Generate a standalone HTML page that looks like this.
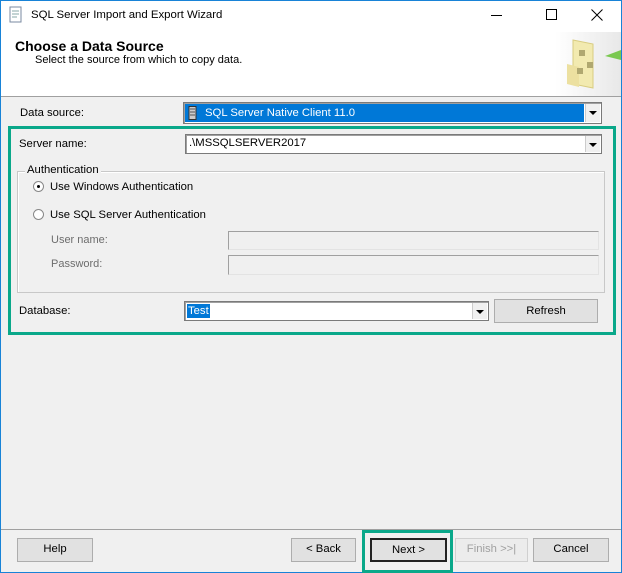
<!DOCTYPE html>
<html><head><style>
*{box-sizing:border-box;margin:0;padding:0}
body{width:622px;height:573px;position:relative;background:#f0f0f0;font-family:"Liberation Sans",sans-serif;font-size:11.3px;color:#000;overflow:hidden}
.a{position:absolute}
.win{left:0;top:0;width:622px;height:573px;border:1px solid #1883d7}
.btn{position:absolute;background:#e1e1e1;border:1px solid #adadad;text-align:center;line-height:21px;font-size:11.3px}
.cb{position:absolute;background:#fff;border:1px solid #7a7a7a;box-shadow:inset 1px 1px 0 #a0a0a0}
.arr{position:absolute;right:1px;top:1px;bottom:1px;width:15px;background:#f0f0f0;border-left:1px solid #ccc}
.arr:after{content:"";position:absolute;left:3px;top:7px;border:4px solid transparent;border-top:4px solid #000;border-bottom:0}
.tb{position:absolute;border:1px solid #a0a0a0;border-right-color:#e3e3e3;border-bottom-color:#e3e3e3;background:#f0f0f0}
.rad{position:absolute;width:11px;height:11px;border-radius:50%;border:1px solid #888;background:#fff}
</style></head><body>
<div class="a win"></div>
<div class="a" style="left:1px;top:1px;width:620px;height:96px;background:#fff;border-bottom:1px solid #a0a0a0"></div>
<svg class="a" style="left:8px;top:6px" width="16" height="18"><rect x="2" y="1" width="11" height="15" fill="#fff" stroke="#7a8aa0"/><path d="M4 5h7M4 8h7M4 11h5" stroke="#8aa" /></svg>
<div class="a" style="left:31px;top:9px;font-size:11.4px">SQL Server Import and Export Wizard</div>
<div class="a" style="left:491px;top:15px;width:11px;height:1px;background:#000"></div>
<div class="a" style="left:546px;top:9px;width:11px;height:11px;border:1px solid #000"></div>
<svg class="a" style="left:591px;top:9px" width="12" height="12"><path d="M0.5 0.5L11.5 11.5M11.5 0.5L0.5 11.5" stroke="#000"/></svg>
<div class="a" style="left:15px;top:38px;font-size:14px;font-weight:bold">Choose a Data Source</div>
<div class="a" style="left:35px;top:54px;font-size:11px">Select the source from which to copy data.</div>
<div class="a" style="left:555px;top:32px;width:66px;height:64px;background:linear-gradient(90deg,#fff,#e8e8e8)"></div>
<svg class="a" style="left:565px;top:36px" width="56" height="56"><path d="M8 4l20 4v44l-20-4z" fill="#f2eab0" stroke="#d8cc80"/><path d="M2 28l12 3v20l-12-3z" fill="#ece0a0"/><rect x="14" y="14" width="6" height="6" fill="#b0a870"/><rect x="22" y="26" width="6" height="6" fill="#b0a870"/><rect x="12" y="32" width="6" height="6" fill="#b0a870"/><path d="M40 20l16-6v10z" fill="#7ac850"/></svg>

<div class="a" style="left:20px;top:107px">Data source:</div>
<div class="cb" style="left:183px;top:102px;width:419px;height:22px"><div class="a" style="left:1px;top:1px;right:17px;bottom:1px;background:#0078d7"></div><svg class="a" style="left:4px;top:3px" width="10" height="14"><rect x="1" y="0.5" width="7" height="13" fill="#ccc" stroke="#333"/><path d="M2 3h5M2 6h5M2 9h5" stroke="#555"/></svg><div class="a" style="left:21px;top:4px;color:#fff">SQL Server Native Client 11.0</div><div class="arr"></div></div>

<div class="a" style="left:8px;top:126px;width:608px;height:209px;border:3px solid #0aa88a"></div>
<div class="a" style="left:19px;top:138px">Server name:</div>
<div class="cb" style="left:185px;top:134px;width:417px;height:20px"><div class="a" style="left:3px;top:2px">.\MSSQLSERVER2017</div><div class="arr"></div></div>

<div class="a" style="left:17px;top:171px;width:588px;height:122px;border:1px solid #c8c8c8;box-shadow:inset 1px 1px 0 #fff"></div>
<div class="a" style="left:25px;top:164px;background:#f0f0f0;padding:0 2px">Authentication</div>
<div class="rad" style="left:33px;top:181px"><div class="a" style="left:3px;top:3px;width:3px;height:3px;background:#000;border-radius:50%"></div></div>
<div class="a" style="left:50px;top:181px">Use Windows Authentication</div>
<div class="rad" style="left:33px;top:209px"></div>
<div class="a" style="left:50px;top:209px">Use SQL Server Authentication</div>
<div class="a" style="left:51px;top:234px;color:#6d6d6d;font-size:11px">User name:</div>
<div class="tb" style="left:228px;top:231px;width:371px;height:19px"></div>
<div class="a" style="left:51px;top:258px;color:#6d6d6d;font-size:11px">Password:</div>
<div class="tb" style="left:228px;top:255px;width:371px;height:20px"></div>

<div class="a" style="left:19px;top:305px">Database:</div>
<div class="cb" style="left:184px;top:301px;width:305px;height:20px"><div class="a" style="left:2px;top:2px;background:#0078d7;color:#fff;padding:0 1px;line-height:14px">Test</div><div class="arr"></div></div>
<div class="btn" style="left:494px;top:299px;width:104px;height:24px;line-height:22px">Refresh</div>

<div class="a" style="left:1px;top:529px;width:620px;height:1px;background:#a0a0a0"></div>
<div class="btn" style="left:17px;top:538px;width:76px;height:24px">Help</div>
<div class="btn" style="left:291px;top:538px;width:65px;height:24px">&lt; Back</div>
<div class="a" style="left:362px;top:530px;width:91px;height:43px;border:3px solid #0aa88a"></div>
<div class="btn" style="left:370px;top:538px;width:77px;height:24px;border:2px solid #222;line-height:20px">Next &gt;</div>
<div class="btn" style="left:455px;top:538px;width:73px;height:24px;color:#a0a0a0;background:#ececec;border-color:#d0d0d0">Finish &gt;&gt;|</div>
<div class="btn" style="left:533px;top:538px;width:76px;height:24px">Cancel</div>
</body></html>
